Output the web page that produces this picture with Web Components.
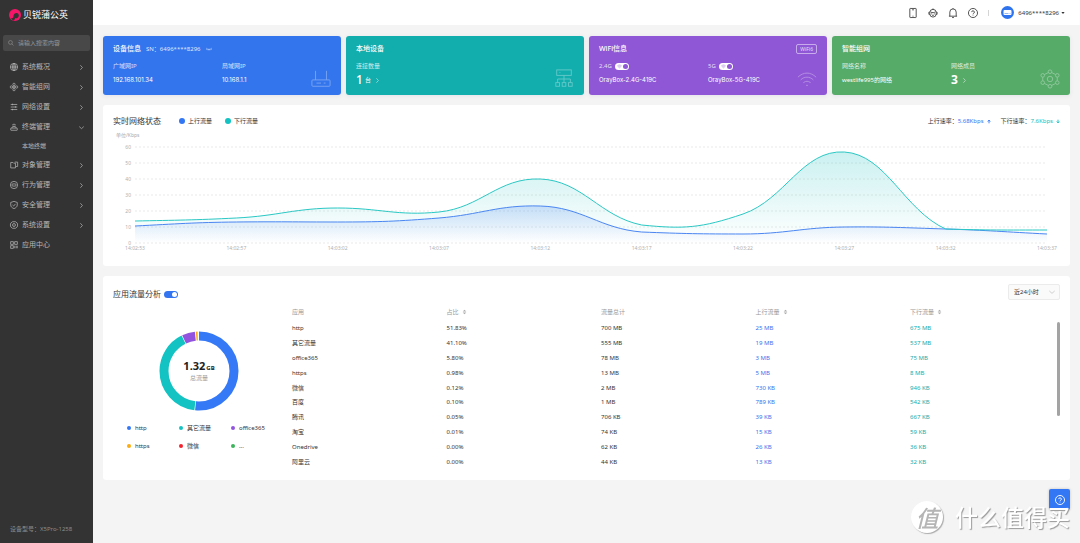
<!DOCTYPE html>
<html lang="zh-CN">
<head>
<meta charset="utf-8">
<title>贝锐蒲公英</title>
<style>
body{margin:0;background:#f4f4f4;font:6px/8px "Noto Sans","Noto Sans CJK SC",sans-serif;color:#333}
</style>
</head>
<body>
<oray-app></oray-app>
<script>
const define = (name, css, html) => customElements.define(name, class extends HTMLElement {
  connectedCallback() {
    if (this.shadowRoot) return;
    const root = this.attachShadow({ mode: 'open' });
    const t = document.createElement('template');
    t.innerHTML = `<style>*{box-sizing:border-box}${css}</style>${typeof html === 'function' ? html(this) : html}`;
    root.append(t.content.cloneNode(true));
  }
});

const icons = {
  search: '<circle cx="9" cy="9" r="7"/><path d="M14 14l6 6"/>',
  globe: '<circle cx="11" cy="11" r="10"/><ellipse cx="11" cy="11" rx="4" ry="10"/><path d="M1 11h20M11 1v20"/>',
  mesh: '<rect x="8" y="1" width="6" height="6" rx="2"/><rect x="8" y="15" width="6" height="6" rx="2"/><rect x="1" y="8" width="6" height="6" rx="2"/><rect x="15" y="8" width="6" height="6" rx="2"/><path d="M11 7v8M7 11h8"/>',
  sliders: '<path d="M2 4h18M2 11h18M2 18h18M7 2v4M15 9v4M7 16v4"/>',
  terminal: '<rect x="2" y="14" width="18" height="6" rx="1"/><path d="M5 14l2-4h8l2 4M11 10V7"/><path d="M6 6a6 6 0 0 1 10 0"/>',
  folder: '<path d="M2 4h6l2 2h5v13H2zM13 3h8v12h-5"/>',
  behavior: '<circle cx="11" cy="11" r="10"/><rect x="5" y="8" width="12" height="6" rx="3"/>',
  shield: '<path d="M11 1l9 3v7c0 5-4 8-9 10-5-2-9-5-9-10V4z"/><path d="M7 11l3 3 5-6"/>',
  gear: '<path d="M7 2h8l5 4 1 5-1 5-5 4H7l-5-4-1-5 1-5z"/><circle cx="11" cy="11" r="4"/>',
  apps: '<rect x="2" y="2" width="7" height="7"/><rect x="13" y="2" width="7" height="7"/><rect x="2" y="13" width="7" height="7"/><path d="M13 13v7M17 13v7M20 13v7"/>',
  right: '<path d="M6 1l9 10-9 10"/>',
  down: '<path d="M1 7l10 9 10-9"/>',
  phone: '<rect x="4" y="1" width="14" height="20" rx="1"/><path d="M9 4h4M10 18h2"/>',
  agent: '<path d="M4 10a7 7 0 0 1 14 0v3a7 7 0 0 1-14 0z"/><path d="M4 9H2v5h2M18 9h2v5h-2M6 9c4 2 7 1 10 0M8 12v2M14 12v2M9 16h4M11 3V1"/>',
  bell: '<path d="M2 18h18M4 18V9a7 7 0 0 1 14 0v9M9 21h4M11 2V0"/>',
  help: '<circle cx="11" cy="11" r="10"/><path d="M8 9a3 3 0 1 1 4 3c-1 .5-1 1-1 2M11 16v1"/>',
  eye: '<path d="M1 8c5 6 15 6 20 0M4 11l-2 3M9 13l-1 3M13 13l1 3M18 11l2 3"/>',
  router: '<rect x="1" y="12" width="20" height="7" rx="1"/><path d="M5 12V2M17 12V2M6 15.500h5M14 15.500h2"/>',
  tree: '<rect x="3" y="1" width="16" height="6"/><path d="M6 4h1M11 7v8M4 15v-4h14v4"/><rect x="2" y="15" width="4" height="4"/><rect x="9" y="15" width="4" height="4"/><rect x="16" y="15" width="4" height="4"/>',
  wifi: '<path d="M1 9c6-6 14-6 20 0M4 12c4-4 10-4 14 0M7 15c3-2 5-2 8 0M10 18h2"/>',
  nodes: '<circle cx="11" cy="11" r="3"/><circle cx="11" cy="3" r="2"/><circle cx="11" cy="19" r="2"/><circle cx="3" cy="7" r="2"/><circle cx="19" cy="7" r="2"/><circle cx="3" cy="15" r="2"/><circle cx="19" cy="15" r="2"/><path d="M5 6l4-2M13 4l4 2M3 9v4M19 9v4M5 16l4 2M13 18l4-2"/>',
  up: '<path d="M11 21V4M4 11l7-8 7 8" stroke-width="5"/>',
  drop: '<path d="M11 1v17M4 11l7 8 7-8" stroke-width="5"/>',
  caret: '<path d="M2 6h18l-9 10z" fill="currentColor" stroke="none"/>',
  sort: '<path d="M3 9l8-8 8 8zM3 13l8 8 8-8z" fill="currentColor" stroke="none"/>'
};
define('ui-icon',
  ':host{display:inline-block;flex:none;width:8px;height:8px}svg{display:block;width:100%;height:100%;overflow:visible}',
  el => `<svg viewBox="0 0 22 22" fill="none" stroke="currentColor" stroke-width="${el.getAttribute('weight') || 2}" aria-hidden="true">${icons[el.getAttribute('name')]}</svg>`);

define('ui-toggle',
  `:host{display:inline-flex}label{display:flex;align-items:center;gap:3px}
  .track{display:grid;align-items:center}.track>*{grid-area:1/1}
  ui-icon{width:5px;height:5px;margin-left:2px;color:var(--knob);pointer-events:none;opacity:.6}
  input{appearance:none;margin:0;width:14px;height:7px;border-radius:4px;background:var(--track,#3375f0);display:flex;justify-content:flex-end;align-items:center;padding:1px}
  input::after{content:"";width:5px;height:5px;border-radius:50%;background:var(--knob,#fff)}`,
  el => `<label><slot></slot><span class="track"><input type="checkbox" checked>${el.hasAttribute('wifi') ? '<ui-icon name="wifi" weight="3"></ui-icon>' : ''}</span></label>`);

define('nav-item',
  `:host{display:block}a{display:flex;align-items:center;height:20px;padding:0 9px 0 10px;gap:4px;color:#b8b8b8;text-decoration:none;font-size:7px}
  span{flex:1}.chev{width:5px;height:5px}:host([sub]) a{height:18px;padding-left:22px;font-size:6px}`,
  el => {
    const i = el.getAttribute('icon'), c = el.getAttribute('chevron');
    return `<a href="#">${i ? `<ui-icon name="${i}"></ui-icon>` : ''}<span><slot></slot></span>${c ? `<ui-icon class="chev" name="${c}" weight="3"></ui-icon>` : ''}</a>`;
  });

define('side-bar',
  `:host{display:flex;flex-direction:column;background:#333;color:#999}
  .logo{display:flex;align-items:flex-start;gap:2px;padding:9px 9px 0;height:35px;color:#fff;font-size:9px;line-height:12px}
  .logo svg{width:12px;height:12px}
  .search{display:flex;align-items:center;gap:4px;margin:0 3px 6px;padding:0 5px;height:16px;background:#484848;border-radius:2px;color:#999}
  .search ui-icon{width:6px;height:6px}
  input{flex:1;min-width:0;border:0;padding:0;background:none;outline:0;font:inherit;color:#ddd}input::placeholder{color:#999;opacity:1}
  footer{margin-top:auto;padding:0 10px 10px;color:#8c8c8c;white-space:nowrap}`,
  `<div class="logo"><svg viewBox="0 0 24 24"><circle cx="12" cy="12" r="12" fill="#f5166a"/><path d="M4 18c4 1 5-1 5-4 0-4 3-7 7-6 4 1 5 6 2 9-2 2-5 2-6 1 0 2-1 4-3 5-3-1-4-3-5-5z" fill="#333"/></svg><span>贝锐蒲公英</span></div>
  <label class="search"><ui-icon name="search"></ui-icon><input type="search" placeholder="请输入搜索内容" aria-label="搜索"></label>
  <nav>
  <nav-item icon="globe" chevron="right">系统概况</nav-item>
  <nav-item icon="mesh" chevron="right">智能组网</nav-item>
  <nav-item icon="sliders" chevron="right">网络设置</nav-item>
  <nav-item icon="terminal" chevron="down">终端管理</nav-item>
  <nav-item sub>本地终端</nav-item>
  <nav-item icon="folder" chevron="right">对象管理</nav-item>
  <nav-item icon="behavior" chevron="right">行为管理</nav-item>
  <nav-item icon="shield" chevron="right">安全管理</nav-item>
  <nav-item icon="gear" chevron="right">系统设置</nav-item>
  <nav-item icon="apps">应用中心</nav-item>
  </nav>
  <footer>设备型号：X5Pro-1258</footer>`);

define('top-bar',
  `:host{display:flex;align-items:center;justify-content:flex-end;height:25px;padding:0 15px;background:#fff}
  button{border:0;background:none;padding:0;font:inherit;color:inherit;display:flex;align-items:center}
  .tools{display:flex;gap:10px}.tools ui-icon{width:10px;height:10px;color:#444}
  i{width:1px;height:6px;background:#d5d5d5;margin:0 12px 0 10px}
  .user{gap:4px}.avatar{width:13px;height:13px}.caret{width:4px;height:4px;margin-left:-2px}`,
  `<div class="tools"><button aria-label="手机"><ui-icon name="phone"></ui-icon></button><button aria-label="客服"><ui-icon name="agent"></ui-icon></button><button aria-label="通知"><ui-icon name="bell"></ui-icon></button><button aria-label="帮助"><ui-icon name="help"></ui-icon></button></div><i></i>
  <button class="user"><svg class="avatar" viewBox="0 0 26 26"><circle cx="13" cy="13" r="13" fill="#2f74ee"/><rect x="5" y="8" width="16" height="10" rx="2" fill="#fff"/><path d="M7 15h8M17 15h2" stroke="#2f74ee"/></svg><span>6496****8296</span><ui-icon class="caret" name="caret"></ui-icon></button>`);

define('stat-card',
  `:host{display:grid;height:59px;padding:8px 10px;border-radius:3px;color:#fff;box-shadow:0 1px 4px #5050a01a}
  .body,.mark{grid-area:1/1}.head{display:flex;align-items:center;gap:5px;height:10px}
  h2{margin:0;font-size:7px;line-height:10px;font-weight:500}
  .extra{flex:1;display:flex}.cols{display:grid;grid-template-columns:1fr 1fr;margin-top:7px}
  .mark{place-self:end;width:20px;height:20px;opacity:.35}`,
  el => `<div class="body"><div class="head"><h2>${el.getAttribute('heading')}</h2><div class="extra"><slot name="extra"></slot></div></div><div class="cols"><slot></slot></div></div><ui-icon class="mark" name="${el.getAttribute('icon')}" weight="1"></ui-icon>`);

define('stat-field',
  `:host{display:block}.label{height:10px;line-height:10px;color:#ffffffcc;display:flex;align-items:center}
  .value{display:flex;align-items:center;gap:2px;height:18px;font-family:var(--value-font,inherit);white-space:nowrap}`,
  '<div class="label"><slot name="label"></slot></div><div class="value"><slot></slot></div>');

define('stat-row',
  `:host{display:grid;grid-template-columns:repeat(4,1fr);gap:5px}
  .blue{background:#3375ed}.teal{background:#12adad}.purple{background:#8f57d5}.green{background:#56ab69}
  .blue,.purple{--value-font:Inter,"Noto Sans CJK SC",sans-serif}
  .sn{display:flex;align-items:center;gap:4px;color:#ffffffd9}.badge{margin-left:auto;border:1px solid #ffffff80;border-radius:2px;padding:0 3px;color:#ffffffcc;font-size:5px}
  ui-toggle{--track:#fff;--knob:#8f57d5}b{font-weight:500;font-size:12px}.green b{font-weight:700}
  .go{width:5px;height:5px;margin-left:2px;opacity:.7}.sn ui-icon{width:8px;height:6px}`,
  `<stat-card class="blue" heading="设备信息" icon="router"><span slot="extra" class="sn">SN：6496****8296 <ui-icon name="eye"></ui-icon></span>
    <stat-field><span slot="label">广域网IP</span>192.168.101.34</stat-field><stat-field><span slot="label">局域网IP</span>10.168.1.1</stat-field></stat-card>
  <stat-card class="teal" heading="本地设备" icon="tree"><stat-field><span slot="label">连接数量</span><b>1</b><span>台</span><ui-icon class="go" name="right" weight="3"></ui-icon></stat-field></stat-card>
  <stat-card class="purple" heading="WiFi信息" icon="wifi"><span slot="extra" class="badge">WiFi6</span>
    <stat-field><ui-toggle wifi slot="label">2.4G</ui-toggle>OrayBox-2.4G-419C</stat-field><stat-field><ui-toggle wifi slot="label">5G</ui-toggle>OrayBox-5G-419C</stat-field></stat-card>
  <stat-card class="green" heading="智能组网" icon="nodes"><stat-field><span slot="label">网络名称</span>westlife995的网络</stat-field><stat-field><span slot="label">网络成员</span><b>3</b><ui-icon class="go" name="right" weight="3"></ui-icon></stat-field></stat-card>`);

/* Smooth line through evenly spaced points: each is [y, slope in, slope out]. */
const step = 912 / 9, handle = 42;
const curve = pts => pts.reduce((d, p, i) => {
  if (!i) return `M0 ${p[0]}`;
  const q = pts[i - 1], x0 = (i - 1) * step, x1 = i * step;
  return `${d}C${x0 + handle} ${q[0] + (q[2] ?? q[1]) * handle} ${x1 - handle} ${p[0] - p[1] * handle} ${x1} ${p[0]}`;
}, '');
const down = curve([[74, -.02], [71, -.05], [61, 0], [65, -.1], [32, .04], [78, .2, .1], [67, -.34], [5, .06], [82, .45, .03], [83, 0]]);
const up = curve([[79, -.05], [75, -.01], [75, 0], [71, -.08], [59, .03], [85, .08, .04], [87, 0], [80, -.01], [82, .03], [87, .05]]);
const times = ['14:02:53', '14:02:57', '14:03:02', '14:03:07', '14:03:12', '14:03:17', '14:03:22', '14:03:27', '14:03:32', '14:03:37'];

define('traffic-chart',
  `:host{display:block;padding:10px 10px 15px;background:#fff;border-radius:3px}
  header{display:flex;align-items:center;height:12px}h2{margin:0 18px 0 0;font-size:8px;line-height:12px;font-weight:400}
  .key{display:flex;align-items:center;gap:3px;margin-right:13px}.key::before{content:"";width:6px;height:6px;border-radius:50%;background:var(--c)}
  .rates{margin-left:auto;display:flex;gap:10px}.rate{display:flex;align-items:center}.rate ui-icon{width:4px;height:5px;margin-left:3px}
  .rate b{font-weight:400;color:var(--c);display:flex;align-items:center}
  .unit{margin:4px 0 8px 3px;font-size:5px;color:#aaa}
  .plot{display:grid;grid-template-columns:18px 1fr;column-gap:4px;padding-right:13px;font-size:5px;line-height:6px;color:#b0b0b0}
  .y{display:flex;flex-direction:column;justify-content:space-between;margin:-3px 0;text-align:right}
  svg{display:block;width:100%;height:96px;overflow:visible}path,line{vector-effect:non-scaling-stroke}
  .x{grid-column:2;display:flex;justify-content:space-between;margin:2px -20px 0}.x span{width:40px;text-align:center}`,
  `<header><h2>实时网络状态</h2><span class="key" style="--c:#3377f5">上行流量</span><span class="key" style="--c:#13c2c2">下行流量</span>
  <div class="rates"><span class="rate">上行速率：<b style="--c:#3377f5">5.68Kbps<ui-icon name="up"></ui-icon></b></span><span class="rate">下行速率：<b style="--c:#13c2c2">7.6Kbps<ui-icon name="drop"></ui-icon></b></span></div></header>
  <div class="unit">单位/Kbps</div>
  <div class="plot"><div class="y">${[60, 50, 40, 30, 20, 10, 0].map(n => `<span>${n}</span>`).join('')}</div>
  <svg viewBox="0 0 912 96" preserveAspectRatio="none" role="img" aria-label="实时网络状态">
  <defs><linearGradient id="t" gradientUnits="userSpaceOnUse" x1="0" y1="5" x2="0" y2="96"><stop stop-color="#13bcbc" stop-opacity=".22"/><stop offset="1" stop-color="#13bcbc" stop-opacity="0"/></linearGradient>
  <linearGradient id="b" gradientUnits="userSpaceOnUse" x1="0" y1="59" x2="0" y2="96"><stop stop-color="#4080f0" stop-opacity=".22"/><stop offset="1" stop-color="#4080f0" stop-opacity="0"/></linearGradient></defs>
  ${[0, 16, 32, 48, 64, 80, 96].map(y => `<line x1="0" x2="912" y1="${y}" y2="${y}" stroke="#e9e9e9" stroke-dasharray="2 2"/>`).join('')}
  <path d="${down}V96H0z" fill="url(#t)"/><path d="${up}V96H0z" fill="url(#b)"/>
  <path d="${up}" fill="none" stroke="#4a86f2" stroke-width="1"/><path d="${down}" fill="none" stroke="#2ac8c4" stroke-width="1"/></svg>
  <div class="x">${times.map(t => `<span>${t}</span>`).join('')}</div></div>`);

const slices = [[0, 51.6, '#3579f6'], [51.9, 92.7, '#13c2c2'], [93, 98.3, '#9254de'], [98.7, 99.4, '#faad14']];
define('traffic-donut',
  `:host{display:flex;flex-direction:column;align-items:center}
  .ring{display:grid;place-items:center;margin-top:31px}.ring>*{grid-area:1/1}svg{width:80px;height:80px}
  .total{text-align:center;color:#999}.total b{color:#222;font-size:11px;line-height:14px}.total small{font-size:6px;font-weight:700;color:#222;margin-left:1px}.total p{margin:0;line-height:10px}
  ul{list-style:none;margin:13px 0 0 12px;padding:0;display:grid;grid-template-columns:repeat(3,52px);row-gap:10px}
  li{display:flex;align-items:center;gap:4px}li::before{content:"";width:4px;height:4px;border-radius:50%;background:var(--c)}`,
  `<div class="ring"><svg viewBox="0 0 80 80" role="img" aria-label="应用流量占比"><g fill="none" stroke-width="9" transform="rotate(-90 40 40)">${slices.map(([a, b, c]) => `<circle cx="40" cy="40" r="35" pathLength="100" stroke="${c}" stroke-dasharray="${b - a} 200" stroke-dashoffset="${-a}"/>`).join('')}</g></svg>
  <div class="total"><b>1.32</b><small>GB</small><p>总流量</p></div></div>
  <ul><li style="--c:#3377f5">http</li><li style="--c:#13c2c2">其它流量</li><li style="--c:#9254de">office365</li><li style="--c:#faad14">https</li><li style="--c:#f5222d">微信</li><li style="--c:#3db45c">...</li></ul>`);

const rows = [
  ['http', '51.83%', '700 MB', '25 MB', '675 MB'], ['其它流量', '41.10%', '555 MB', '19 MB', '537 MB'],
  ['office365', '5.80%', '78 MB', '3 MB', '75 MB'], ['https', '0.98%', '13 MB', '5 MB', '8 MB'],
  ['微信', '0.12%', '2 MB', '730 KB', '946 KB'], ['百度', '0.10%', '1 MB', '789 KB', '542 KB'],
  ['腾讯', '0.05%', '706 KB', '39 KB', '667 KB'], ['淘宝', '0.01%', '74 KB', '15 KB', '59 KB'],
  ['Onedrive', '0.00%', '62 KB', '26 KB', '36 KB'], ['阿里云', '0.00%', '44 KB', '13 KB', '32 KB']];
define('traffic-table',
  `:host{display:flex;padding-top:3px}table{flex:1;width:100%;height:166px;table-layout:fixed;border-collapse:collapse}
  th,td{padding:0;text-align:left;font-weight:400}th{height:18px;color:#999;width:20.2%}th:last-child{width:auto}th ui-icon{width:5px;height:6px;margin-left:3px;color:#aaa;vertical-align:middle}
  td:nth-child(4){color:#3375ed}td:nth-child(5){color:#12adad}
  .bar{width:3px;height:94px;margin-top:19px;border-radius:2px;background:#a3a3a3}`,
  `<table><thead><tr><th>应用</th><th>占比<ui-icon name="sort"></ui-icon></th><th>流量总计</th><th>上行流量<ui-icon name="sort"></ui-icon></th><th>下行流量<ui-icon name="sort"></ui-icon></th></tr></thead>
  <tbody>${rows.map(r => `<tr>${r.map(c => `<td>${c}</td>`).join('')}</tr>`).join('')}</tbody></table><div class="bar"></div>`);

define('app-traffic',
  `:host{display:block;padding:8px 10px 11px;background:#fff;border-radius:3px}
  header{display:flex;align-items:flex-end;justify-content:space-between;height:16px}
  h2{margin:0;font-size:8px;line-height:12px;font-weight:400}
  .pick{display:grid;align-items:center;width:52px;height:16px}.pick>*{grid-area:1/1}
  select{appearance:none;width:100%;height:16px;padding:0 5px;border:1px solid #ebebeb;border-radius:2px;background:#fafafa;font:inherit;color:#333}
  .pick ui-icon{justify-self:end;width:6px;height:6px;margin-right:5px;color:#aaa;pointer-events:none}
  .body{display:grid;grid-template-columns:172px 1fr;gap:7px}`,
  `<header><ui-toggle><h2>应用流量分析</h2></ui-toggle><div class="pick"><select aria-label="时间范围"><option>近24小时</option></select><ui-icon name="down"></ui-icon></div></header>
  <div class="body"><traffic-donut></traffic-donut><traffic-table></traffic-table></div>`);

define('help-button',
  `:host{position:fixed;right:10px;bottom:33px}button{display:grid;place-items:center;width:21px;height:21px;border:0;border-radius:2px;padding:0;background:#3377f5;color:#fff;box-shadow:0 0 3px #0003}ui-icon{width:10px;height:10px}`,
  '<button aria-label="帮助"><ui-icon name="help"></ui-icon></button>');

define('water-mark',
  `:host{position:fixed;right:10px;bottom:9px;display:flex;align-items:center;gap:12px;pointer-events:none;color:#fff;font-size:23px;line-height:34px;font-weight:500;text-shadow:1px 1px 1px #999}
  .seal{display:grid;place-items:center;width:32px;height:32px;border-radius:50%;background:#fff;color:#b5b5b5;font-style:italic;text-shadow:none;box-shadow:1px 1px 1px #aaa}`,
  '<span class="seal">值</span><span>什么值得买</span>');

define('oray-app',
  `:host{display:grid;grid-template-columns:93px minmax(0,1fr);min-height:100vh}
  main{display:grid;gap:10px;padding:11px 10px}`,
  `<side-bar></side-bar><div><top-bar></top-bar><main><stat-row></stat-row><traffic-chart></traffic-chart><app-traffic></app-traffic></main></div><help-button></help-button><water-mark></water-mark>`);
</script>
</body>
</html>
